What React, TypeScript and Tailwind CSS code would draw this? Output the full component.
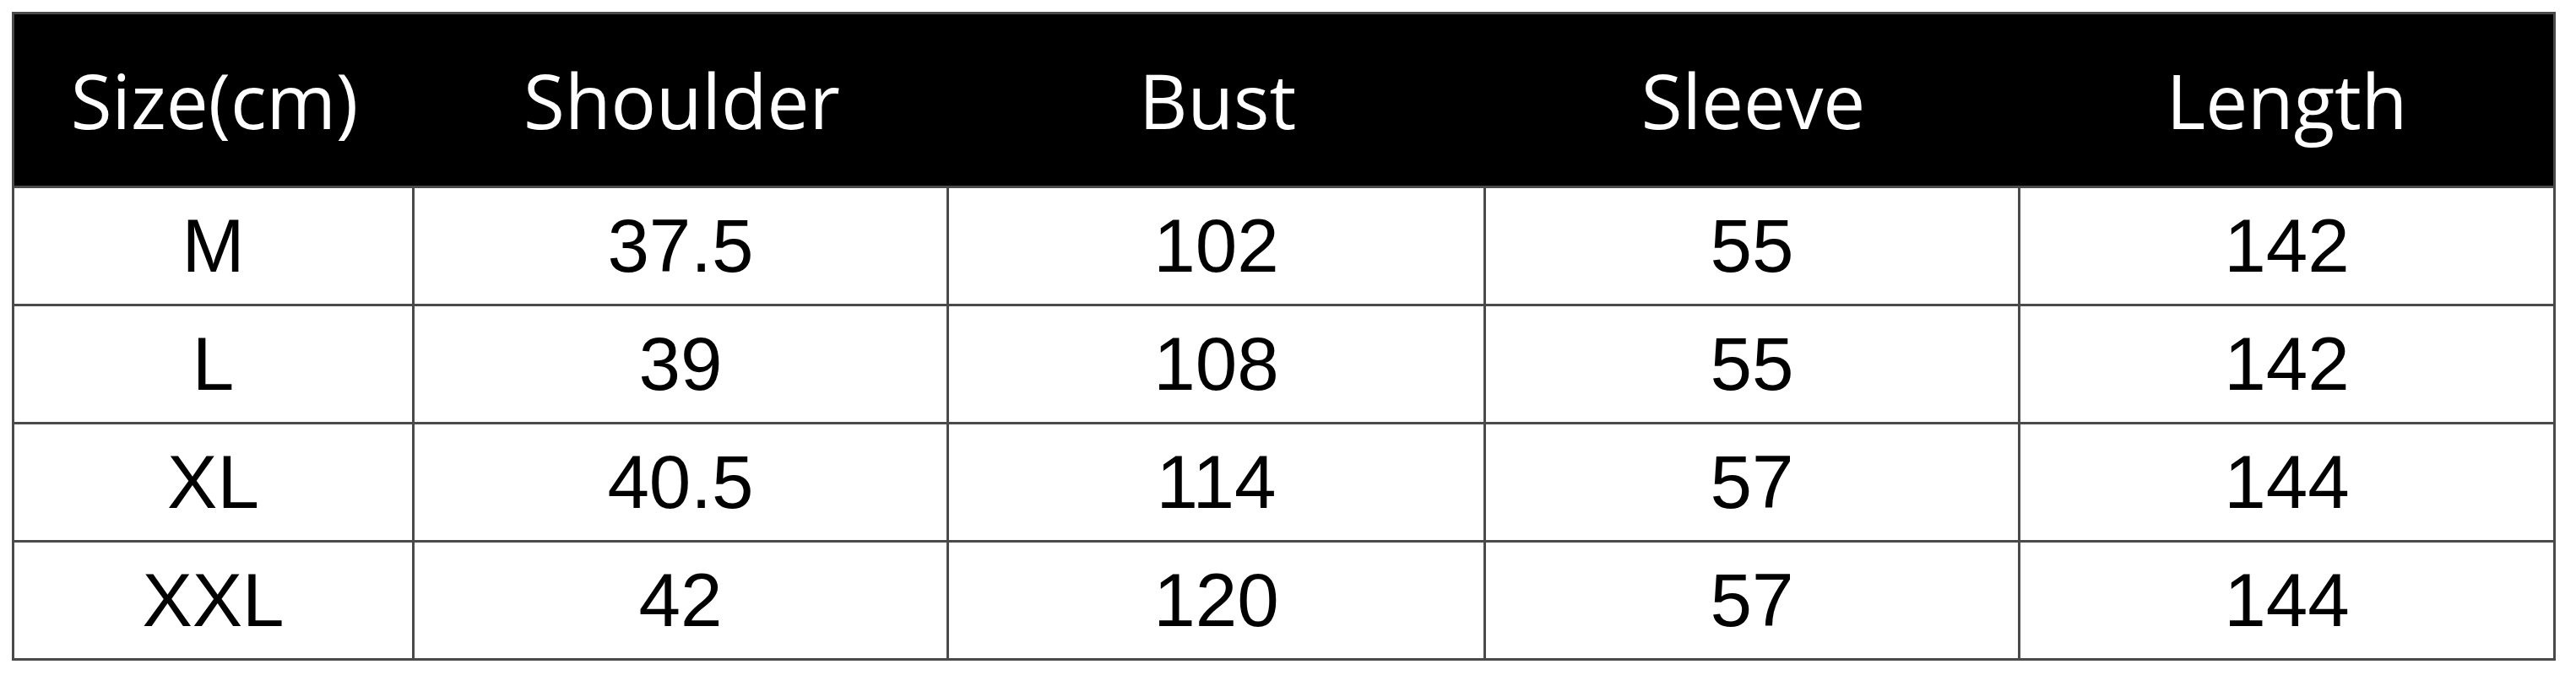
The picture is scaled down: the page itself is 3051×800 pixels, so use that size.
import React from "react";

const headers = ["Size(cm)", "Shoulder", "Bust", "Sleeve", "Length"];
const rows = [
  ["M", "37.5", "102", "55", "142"],
  ["L", "39", "108", "55", "142"],
  ["XL", "40.5", "114", "57", "144"],
  ["XXL", "42", "120", "57", "144"],
];
const widths = ["w-[474px]", "w-[633px]", "w-[636px]", "w-[633px]", "w-[631px]"];

export default function App() {
  return (
    <div className="w-[3051px] h-[800px] bg-white pl-[14px] pt-[14px]">
      <div className="w-[3013px] border-[3px] border-[#4a4a4a] box-border">
        <div className="flex h-[203px] bg-black">
          {headers.map((h, i) => (
            <div
              key={h}
              className={`${widths[i]} flex items-center justify-center text-white text-[89px] leading-none font-['Open_Sans',sans-serif]`}
            >
              {h}
            </div>
          ))}
        </div>
        {rows.map((r, ri) => (
          <div key={ri} className="flex h-[140px] border-t-[3px] border-[#4a4a4a]">
            {r.map((c, i) => (
              <div
                key={i}
                className={`${widths[i]} ${i < 4 ? "border-r-[3px] border-[#4a4a4a]" : ""} flex items-center justify-center text-black text-[89px] leading-none font-['Liberation_Sans',Arial,sans-serif]`}
              >
                {c}
              </div>
            ))}
          </div>
        ))}
      </div>
    </div>
  );
}
